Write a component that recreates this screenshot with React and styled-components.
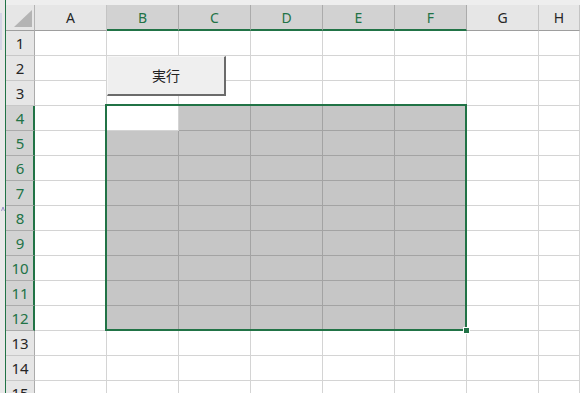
import React from "react";
import styled, { createGlobalStyle } from "styled-components";

const Global = createGlobalStyle`
  html, body { margin: 0; padding: 0; background: #ffffff; overflow: hidden; }
  body { font-family: "Noto Sans", "Liberation Sans", sans-serif; }
`;

const GREEN = "#217346";
const COLS = ["A", "B", "C", "D", "E", "F", "G", "H"];
const ROWS = Array.from({ length: 15 }, (_, i) => i + 1);
const inCol = (c) => c >= 1 && c <= 5;
const inRow = (r) => r >= 4 && r <= 12;

const Window = styled.div`
  display: flex;
  width: 580px;
  height: 393px;
  overflow: hidden;
`;

const LeftFrame = styled.div`
  position: relative;
  flex: 0 0 5px;
  background: #e9e9e9;
  border-right: 1px solid ${GREEN};
`;

const LavenderMark = styled.div`
  position: absolute;
  left: 0;
  top: 13px;
  width: 2px;
  height: 37px;
  background: #d5d5e6;
`;

const Caret = styled.svg`
  position: absolute;
  left: 1px;
  top: 206px;
`;

const Main = styled.div`
  flex: 1;
  display: flex;
  flex-direction: column;
  min-width: 0;
`;

const TopStrip = styled.div`
  flex: 0 0 5px;
  background: #eeeeee;
`;

const Grid = styled.div`
  position: relative;
  flex: 0 0 auto;
  display: grid;
  grid-template-columns: 29px repeat(7, 72px) 1fr;
  grid-template-rows: 26px repeat(15, 25px);
`;

const Corner = styled.div`
  position: relative;
  background: #e6e6e6;
  border-right: 1px solid #b4b4b4;
  border-bottom: 1px solid #9e9e9e;
`;

const CornerTriangle = styled.div`
  position: absolute;
  left: 8px;
  top: 5px;
  width: 0;
  height: 0;
  border-style: solid;
  border-width: 0 0 17px 18px;
  border-color: transparent transparent #b4b4b4 transparent;
`;

const ColHead = styled.div`
  box-sizing: border-box;
  display: flex;
  align-items: center;
  justify-content: center;
  font-size: 14px;
  background: ${(p) => (p.$sel ? "#d2d2d2" : "#e6e6e6")};
  color: ${(p) => (p.$sel ? GREEN : "#262626")};
  border-right: 1px solid ${(p) => (p.$sel ? "#ababab" : "#c4c4c4")};
  border-bottom: ${(p) => (p.$sel ? `2px solid ${GREEN}` : "1px solid #9e9e9e")};
  padding-top: ${(p) => (p.$sel ? "1px" : "0")};
`;

const RowHead = styled.div`
  box-sizing: border-box;
  display: flex;
  align-items: center;
  justify-content: center;
  font-size: 15px;
  background: ${(p) => (p.$sel ? "#d2d2d2" : "#e6e6e6")};
  color: ${(p) => (p.$sel ? GREEN : "#262626")};
  border-right: ${(p) => (p.$sel ? `2px solid ${GREEN}` : "1px solid #ababab")};
  border-bottom: 1px solid ${(p) => (p.$sel ? "#ababab" : "#c8c8c8")};
  padding-left: ${(p) => (p.$sel ? "1px" : "0")};
`;

const Cell = styled.div`
  box-sizing: border-box;
  background: ${(p) => (p.$fill ? "#c6c6c6" : "#ffffff")};
  border-right: 1px solid ${(p) => (p.$fill ? "#a3a3a3" : "#d4d4d4")};
  border-bottom: 1px solid ${(p) => (p.$fill ? "#a3a3a3" : "#d4d4d4")};
`;

const Selection = styled.div`
  position: absolute;
  left: 99px;
  top: 99px;
  width: 362px;
  height: 227px;
  box-sizing: border-box;
  border: 2px solid ${GREEN};
  pointer-events: none;
`;

const FillHandle = styled.div`
  position: absolute;
  left: 457px;
  top: 322px;
  width: 5px;
  height: 5px;
  background: ${GREEN};
  border: 1px solid #ffffff;
`;

const RunButton = styled.button`
  position: absolute;
  left: 101px;
  top: 51px;
  width: 119px;
  height: 40px;
  box-sizing: border-box;
  margin: 0;
  padding: 0;
  background: #efefef;
  border-top: 1px solid #f7f7f7;
  border-left: 1px solid #f7f7f7;
  border-right: 2px solid #6b6b6b;
  border-bottom: 2px solid #6b6b6b;
  font-family: "Noto Sans CJK JP", "Noto Sans", sans-serif;
  font-size: 14px;
  color: #222222;
  display: flex;
  align-items: center;
  justify-content: center;
  padding-bottom: 2px;
`;

export default function App() {
  return (
    <>
      <Global />
      <Window>
        <LeftFrame>
          <LavenderMark />
          <Caret width="4" height="6" viewBox="0 0 4 6">
            <path d="M0.5 5 L2 1 L3.5 5" fill="none" stroke="#8a7cc0" strokeWidth="0.8" />
          </Caret>
        </LeftFrame>
        <Main>
          <TopStrip />
          <Grid>
            <Corner>
              <CornerTriangle />
            </Corner>
            {COLS.map((c, i) => (
              <ColHead key={c} $sel={inCol(i)}>
                {c}
              </ColHead>
            ))}
            {ROWS.map((r) => (
              <React.Fragment key={r}>
                <RowHead $sel={inRow(r)}>{r}</RowHead>
                {COLS.map((c, i) => (
                  <Cell
                    key={c}
                    $fill={inRow(r) && inCol(i) && !(r === 4 && i === 1)}
                  />
                ))}
              </React.Fragment>
            ))}
            <RunButton>実行</RunButton>
            <Selection />
            <FillHandle />
          </Grid>
        </Main>
      </Window>
    </>
  );
}
